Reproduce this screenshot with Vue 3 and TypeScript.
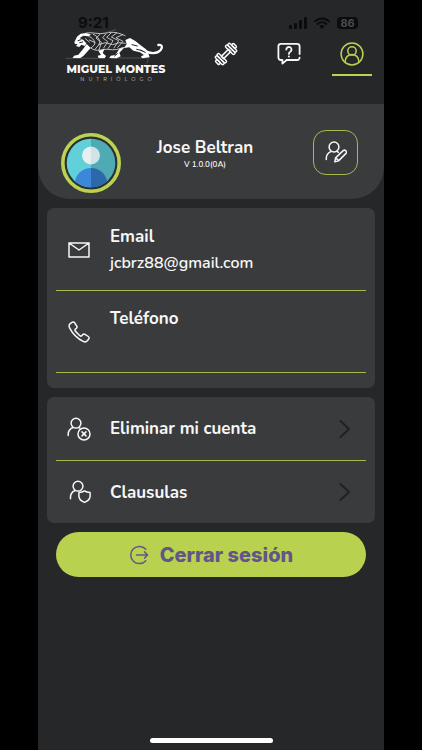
<script setup lang="ts">
interface Field {
  id: string
  label: string
  value: string
}

interface Action {
  id: string
  label: string
}

const fields: Field[] = [
  { id: 'email', label: 'Email', value: 'jcbrz88@gmail.com' },
  { id: 'phone', label: 'Teléfono', value: '' },
]

const actions: Action[] = [
  { id: 'delete', label: 'Eliminar mi cuenta' },
  { id: 'clauses', label: 'Clausulas' },
]
</script>

<template>
  <div class="stage">
    <div class="screen">
      <div class="status">
        <span class="clock">9:21</span>
        <span class="indicators">
          <svg width="18" height="12" viewBox="0 0 18 12" aria-hidden="true">
            <rect x="0" y="8" width="3" height="4" rx="1" />
            <rect x="5" y="6" width="3" height="6" rx="1" />
            <rect x="10" y="3" width="3" height="9" rx="1" />
            <rect x="15" y="0" width="3" height="12" rx="1" />
          </svg>
          <svg width="16" height="12" viewBox="0 0 16 12" aria-hidden="true">
            <path d="M1.2 4.4a9.6 9.6 0 0 1 13.6 0M3.7 7a6.1 6.1 0 0 1 8.6 0" fill="none" stroke="currentColor" stroke-width="2" />
            <path d="M8 12 5.4 9.3a3.8 3.8 0 0 1 5.2 0z" />
          </svg>
          <span class="battery">86</span>
        </span>
      </div>

      <header class="top">
        <a class="brand" href="#inicio">
          <svg class="panther" viewBox="0 0 300 90" aria-hidden="true">
            <path class="ground" d="M0 79h110M132 78h112" />
            <path class="mass" d="M25 31 33 14 44 5 60 3 76 8 66 13 52 11 41 18 52 24 61 34 57 42 46 38 40 45 30 42 35 36 27 36z" />
            <path class="mass" d="M62 36 74 48 52 72 43 78 20 78 24 71 37 68 52 50z" />
            <path class="mass" d="M97 56 116 50 110 63 120 72 116 79 98 78 95 71 105 69z" />
            <path class="mass" d="M162 48 176 46 160 62 164 73 152 79 130 78 134 71 148 69z" />
            <path class="mass" d="M178 24 192 18 208 27 224 40 240 52 247 64 251 76 228 79 225 73 234 69 222 61 202 56 190 46 174 48 182 36z" />
            <path class="tail" d="M234 55c18 11 39 12 50-1 7-9 4-17-7-15" />
            <path
              class="line"
              d="M60 3c20-4 38 6 60 0 22-5 41 0 57 8M74 48c18 14 36 2 52 4 20 3 30 1 48-6M68 13c14 6 20 14 17 26l-9 8M82 7c16 8 22 18 17 31l-12 14M102 7 90 18l16 13-7 23M120 5l-10 12 15 12-12 19M136 2l-14 14 19 10-14 23M152 3l-16 12 22 11-14 22M170 8l-20 9 21 11-16 18M70 24l18 8M98 38l20-6 22 6 20-6 18 2M58 20l12 10"
            />
            <path class="cut" d="m198 38 16 4M212 52l17 4M146 72l8-7M36 26l9-3M50 30l-9 2M238 61l-14-6" />
            <path class="mark" d="M247 81l-4 12M120 2l29-9" />
          </svg>
          <strong>MIGUEL MONTES</strong>
          <small>NUTRIÓLOGO</small>
        </a>
        <nav class="tabs">
          <a href="#rutinas" aria-label="Rutinas">
            <svg width="24" height="24" viewBox="0 0 24 24" aria-hidden="true">
              <g transform="rotate(-45 12 12)">
                <rect x="7" y="10.4" width="10" height="3.2" />
                <rect x="-.8" y="9.5" width="2.6" height="5" rx="1" />
                <rect x="1.8" y="6.5" width="2.8" height="11" rx="1.3" />
                <rect x="4.6" y="6" width="2.8" height="12" rx="1.3" />
                <rect x="16.6" y="6" width="2.8" height="12" rx="1.3" />
                <rect x="19.4" y="6.5" width="2.8" height="11" rx="1.3" />
                <rect x="22.2" y="9.5" width="2.6" height="5" rx="1" />
              </g>
            </svg>
          </a>
          <a href="#ayuda" aria-label="Ayuda">
            <svg width="24" height="24" viewBox="0 0 24 24" aria-hidden="true">
              <path class="bold" d="M22.6 12V4.2a2.4 2.4 0 0 0-2.4-2.4H3.8a2.4 2.4 0 0 0-2.4 2.4v11.4A2.4 2.4 0 0 0 3.8 18h1.6v3.6L9.6 18h10.6a2.4 2.4 0 0 0 2.4-2.4" />
              <path class="bold" d="M9.3 7.6a2.6 2.6 0 1 1 4 2.2c-1 .6-1.4 1-1.4 2.1" />
              <circle class="dot" cx="11.9" cy="14.6" r="1" />
            </svg>
          </a>
          <a class="active" href="#perfil" aria-label="Perfil" aria-current="page">
            <svg width="24" height="24" viewBox="0 0 24 24" aria-hidden="true">
              <circle cx="12" cy="12" r="10.9" />
              <circle cx="12" cy="8.9" r="4.2" />
              <path d="M5.2 20.3v-1.1a6.8 6.8 0 0 1 13.6 0v1.1" />
            </svg>
          </a>
        </nav>
      </header>

      <section class="profile">
        <svg class="avatar" viewBox="0 0 60 60" role="img" aria-label="Foto de perfil">
          <defs>
            <clipPath id="face"><circle cx="30" cy="30" r="24.3" /></clipPath>
          </defs>
          <circle cx="30" cy="30" r="28.2" fill="#2d3033" stroke="#bad352" stroke-width="3.6" />
          <g clip-path="url(#face)">
            <path fill="#62d0d9" d="M0 0h30v60H0z" />
            <path fill="#4eabb4" d="M30 0h30v60H30z" />
            <path fill="#3b87da" d="M30 35a16.500 16.500 0 0 0-16.500 16.500V56H30z" />
            <path fill="#2c68aa" d="M30 35a16.500 16.500 0 0 1 16.500 16.500V56H30z" />
            <path fill="#e8eff1" d="M30 13.500a9 9 0 0 0 0 18z" />
            <path fill="#d2e3e6" d="M30 13.500a9 9 0 0 1 0 18z" />
          </g>
        </svg>
        <div class="identity">
          <h1>Jose Beltran</h1>
          <p>V 1.0.0(0A)</p>
        </div>
        <button class="edit" type="button" aria-label="Editar perfil">
          <svg width="22" height="22" viewBox="0 0 22 22" aria-hidden="true">
            <circle cx="9" cy="6" r="4.9" />
            <path d="M1.300 18.500v-1.200c0-3 1.700-5.400 4.500-6.700M12 10.400l1.400.9M9.800 20.900l.8-4 7.600-7.300a2 2 0 0 1 2.800 2.800l-7.500 7.500zM10.800 16.900l2.800 2.800" />
          </svg>
        </button>
      </section>

      <main>
        <dl class="card">
          <div v-for="field in fields" :key="field.id" class="field">
            <svg v-if="field.id === 'email'" width="22" height="22" viewBox="0 0 22 22" aria-hidden="true">
              <path d="M1 4h20v14H1zM1 4l10 7 10-7" />
            </svg>
            <svg v-else width="22" height="22" viewBox="0 0 22 22" aria-hidden="true">
              <path d="M2.200 2.700 4 1.300a1.700 1.700 0 0 1 2.500.4L8.700 5a1.800 1.800 0 0 1-.4 2.400l-1 .8c-.5.5-.5 1.200 0 1.900l4.600 4.600c.7.6 1.400.5 1.900 0l.8-1a1.800 1.800 0 0 1 2.400-.4l3.300 2.200a1.700 1.700 0 0 1 .4 2.500l-1.400 1.800c-1 1.200-2.500 1.400-4.100.6A31 31 0 0 1 1.600 6.800c-.8-1.600-.6-3.100.6-4.100z" />
            </svg>
            <div>
              <dt>{{ field.label }}</dt>
              <dd>{{ field.value }}</dd>
            </div>
          </div>
        </dl>

        <div class="card actions">
          <button v-for="action in actions" :key="action.id" class="action" type="button">
            <svg v-if="action.id === 'delete'" width="24" height="24" viewBox="0 0 24 24" aria-hidden="true">
              <circle cx="9" cy="6.200" r="4.900" />
              <path d="M1.200 18.500v-1.200c0-3 1.800-5.600 4.800-6.800M11.700 10.600l1.200.6M15 14.900l4 4M19 14.900l-4 4" />
              <circle cx="17" cy="16.900" r="6" />
            </svg>
            <svg v-else width="24" height="24" viewBox="-2 0 24 24" aria-hidden="true">
              <circle cx="9" cy="6.200" r="4.900" />
              <path d="M1.500 18.800v-1.500c0-3 1.700-5.600 4.500-6.800M15.500 10.900c1.600 1.300 3.500 1.600 5.600 1.600v3.700c0 2.600-2.200 4.800-5.600 6.200-3.400-1.400-5.600-3.600-5.600-6.200v-3.700c2.100 0 4-.3 5.600-1.600z" />
            </svg>
            <span>{{ action.label }}</span>
            <svg class="chevron" width="12" height="18" viewBox="0 0 12 18" aria-hidden="true">
              <path d="m1.500 1 8.500 8-8.500 8" />
            </svg>
          </button>
        </div>

        <button class="logout" type="button">
          <svg width="20" height="20" viewBox="0 0 20 20" aria-hidden="true">
            <path d="M16.800 4.300a8.600 8.600 0 1 0 0 11.400M7.500 10h10.800M15.600 6.900l3 3.100-3 3.100" />
          </svg>
          Cerrar sesión
        </button>
      </main>

      <div class="home"></div>
    </div>
  </div>
</template>

<style>
body {
  margin: 0;
  background: #000;
}
</style>

<style scoped>
* {
  box-sizing: border-box;
}

.stage {
  padding: 0 9%;
  background: #000;
}

.screen {
  position: relative;
  display: flex;
  flex-direction: column;
  min-height: 100vh;
  background: #262729;
  color: #f7f7f7;
  font-family: Nunito, "Open Sans", "Noto Sans", sans-serif;
}

svg {
  flex: none;
  fill: none;
  stroke: currentColor;
  stroke-width: 1.5;
  stroke-linecap: round;
  stroke-linejoin: round;
}

a {
  color: inherit;
  text-decoration: none;
}

button {
  padding: 0;
  border: 0;
  background: none;
  color: inherit;
  font: inherit;
}

.status {
  position: absolute;
  top: 14px;
  left: 0;
  right: 0;
  display: flex;
  align-items: center;
  justify-content: space-between;
  padding: 0 26px 0 40px;
  color: #0b0c0d;
  font-family: Inter, sans-serif;
}

.status svg {
  fill: currentColor;
  stroke: none;
}

.clock {
  font-size: 15px;
  font-weight: 700;
  line-height: 18px;
}

.indicators {
  display: flex;
  align-items: center;
  gap: 7px;
}

.battery {
  width: 21px;
  border-radius: 4px;
  background: #0b0c0d;
  color: #4a4b4d;
  font-size: 11px;
  font-weight: 700;
  line-height: 12px;
  text-align: center;
}

.top {
  position: relative;
  display: flex;
  align-items: flex-start;
  justify-content: space-between;
  height: 104px;
  padding: 32px 12px 0 28px;
}

.brand {
  display: flex;
  flex-direction: column;
  align-items: center;
  width: 100px;
}

.panther {
  width: 100px;
  height: 30px;
  overflow: visible;
}

.panther .mass {
  fill: #fff;
  stroke: none;
}

.panther .line {
  stroke: #d8d8d8;
  stroke-width: 2.6;
}

.panther .tail {
  stroke: #fff;
  stroke-width: 7;
}

.panther .cut {
  stroke: #262729;
  stroke-width: 3;
}

.panther .ground,
.panther .mark {
  stroke: #77787a;
  stroke-width: 1.5;
}

.brand strong {
  font-family: Montserrat, Lato, sans-serif;
  font-size: 11px;
  font-weight: 800;
  line-height: 14px;
  white-space: nowrap;
}

.brand small {
  padding-left: 4px;
  color: #c8c9ca;
  font-family: Montserrat, Lato, sans-serif;
  font-size: 5px;
  letter-spacing: 4px;
  line-height: 6px;
}

.tabs {
  display: flex;
  gap: 23px;
}

.tabs a {
  display: flex;
  justify-content: center;
  width: 40px;
  height: 44px;
  padding-top: 10px;
}

.tabs .active {
  border-bottom: 2px solid #bad352;
  color: #bad352;
}

.tabs .bold {
  stroke-width: 1.8;
}

.dot {
  fill: currentColor;
  stroke: none;
}

.profile {
  display: flex;
  align-items: center;
  height: 95px;
  padding: 1px 26px 0 23px;
  border-radius: 0 0 32px 32px;
  background: #3a3b3d;
}

.avatar {
  width: 60px;
  height: 60px;
  margin-top: 22px;
  stroke: none;
}

.identity {
  flex: 1;
  padding: 3px 24px 0 0;
  text-align: center;
}

.identity h1 {
  margin: 0;
  font-size: 17px;
  font-weight: 700;
  line-height: 22px;
}

.identity p {
  margin: 0;
  font-size: 8px;
  font-weight: 600;
  line-height: 12px;
}

.edit {
  display: grid;
  place-items: center;
  width: 45px;
  height: 45px;
  border: 1px solid #a5bb4b;
  border-radius: 13px;
}

main {
  display: flex;
  flex-direction: column;
  gap: 9px;
  padding: 9px;
}

.card {
  margin: 0;
  padding: 0 9px;
  border-radius: 7px;
  background: #3a3b3d;
}

dl.card {
  padding-top: 1px;
  padding-bottom: 15px;
}

.field {
  display: flex;
  align-items: center;
  gap: 20px;
  height: 82px;
  padding-left: 12px;
  border-bottom: 1px solid #a5bb4b;
}

dt,
dd {
  margin: 0;
  min-height: 26px;
  line-height: 26px;
}

dt {
  font-size: 17px;
  font-weight: 700;
}

dd {
  font-size: 16px;
  font-weight: 600;
}

.actions {
  display: flex;
  flex-direction: column;
}

.action {
  display: flex;
  align-items: center;
  gap: 19px;
  height: 63px;
  padding: 0 15px 0 11px;
  font-size: 17px;
  font-weight: 700;
  text-align: left;
}

.action + .action {
  border-top: 1px solid #a5bb4b;
}

.action span {
  flex: 1;
}

.chevron {
  color: #202123;
  stroke-width: 2;
}

.logout {
  display: flex;
  align-items: center;
  justify-content: center;
  gap: 11px;
  height: 45px;
  margin: 0 9px;
  border-radius: 23px;
  background: #b8d24f;
  color: #63548c;
  font-family: Inter, sans-serif;
  font-size: 20px;
  font-weight: 800;
}

.home {
  width: 123px;
  height: 5px;
  margin: auto auto 7px;
  border-radius: 3px;
  background: #fff;
}
</style>
